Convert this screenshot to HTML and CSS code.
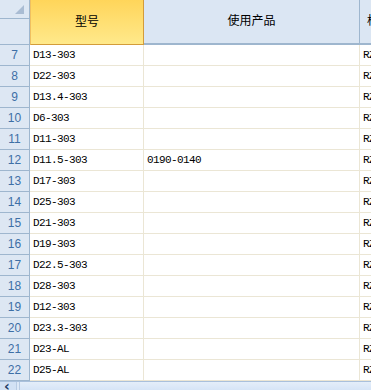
FILE: index.html
```html
<html>
<head>
  <title>Sheet</title>
  <link rel="stylesheet" href="styles.css">
</head>
<body>
  <div class="sheet">
    <div class="row head">
      <div class="corner"><span class="tri"></span><div class="corner-line"></div></div>
      <div class="hcell active">型号</div>
      <div class="hcell">使用产品</div>
      <div class="hcell last">格</div>
    </div>
    <div class="row"><div class="num">7</div><div class="cell">D13-303</div><div class="cell"></div><div class="cell last">RZ</div></div>
    <div class="row"><div class="num">8</div><div class="cell">D22-303</div><div class="cell"></div><div class="cell last">RZ</div></div>
    <div class="row"><div class="num">9</div><div class="cell">D13.4-303</div><div class="cell"></div><div class="cell last">RZ</div></div>
    <div class="row"><div class="num">10</div><div class="cell">D6-303</div><div class="cell"></div><div class="cell last">RZ</div></div>
    <div class="row"><div class="num">11</div><div class="cell">D11-303</div><div class="cell"></div><div class="cell last">RZ</div></div>
    <div class="row"><div class="num">12</div><div class="cell">D11.5-303</div><div class="cell">0190-0140</div><div class="cell last">RZ</div></div>
    <div class="row"><div class="num">13</div><div class="cell">D17-303</div><div class="cell"></div><div class="cell last">RZ</div></div>
    <div class="row"><div class="num">14</div><div class="cell">D25-303</div><div class="cell"></div><div class="cell last">RZ</div></div>
    <div class="row"><div class="num">15</div><div class="cell">D21-303</div><div class="cell"></div><div class="cell last">RZ</div></div>
    <div class="row"><div class="num">16</div><div class="cell">D19-303</div><div class="cell"></div><div class="cell last">RZ</div></div>
    <div class="row"><div class="num">17</div><div class="cell">D22.5-303</div><div class="cell"></div><div class="cell last">RZ</div></div>
    <div class="row"><div class="num">18</div><div class="cell">D28-303</div><div class="cell"></div><div class="cell last">RZ</div></div>
    <div class="row"><div class="num">19</div><div class="cell">D12-303</div><div class="cell"></div><div class="cell last">RZ</div></div>
    <div class="row"><div class="num">20</div><div class="cell">D23.3-303</div><div class="cell"></div><div class="cell last">RZ</div></div>
    <div class="row"><div class="num">21</div><div class="cell">D23-AL</div><div class="cell"></div><div class="cell last">RZ</div></div>
    <div class="row"><div class="num">22</div><div class="cell">D25-AL</div><div class="cell"></div><div class="cell last">RZ</div></div>
    <div class="scrollbar">
      <div class="arrow">&lsaquo;</div>
      <div class="track"></div>
    </div>
  </div>
</body>
</html>
```

FILE: styles.css
```css
body {
  margin: 0;
  padding: 0;
  background: #ffffff;
  overflow: hidden;
}

.sheet {
  width: 371px;
  height: 390px;
  overflow: hidden;
  font-family: "Liberation Mono", monospace;
}

.row {
  display: grid;
  grid-template-columns: 30px 114px 216px 40px;
  height: 21px;
  box-sizing: border-box;
}

.row.head {
  height: 45px;
}

.corner {
  position: relative;
  background: #dde7f3;
  border-right: 1px solid #9eb6ce;
  border-bottom: 1px solid #9eb6ce;
  box-sizing: border-box;
}

.corner-line {
  margin-top: 18px;
  height: 1px;
  background: #9eb6ce;
}

.tri {
  position: absolute;
  left: 15px;
  top: 5px;
  width: 0;
  height: 0;
  border-left: 9px solid transparent;
  border-bottom: 9px solid #a9bcd3;
}

.hcell {
  display: flex;
  align-items: center;
  justify-content: center;
  background: #dbe6f3;
  border-right: 1px solid #9eb6ce;
  border-bottom: 2px solid #9eb6ce;
  box-sizing: border-box;
  font-family: "Noto Sans CJK SC", sans-serif;
  font-size: 12px;
  color: #000;
  padding-bottom: 4px;
}

.hcell.active {
  background: linear-gradient(#ffd55a, #ffe98b);
  border-right: 1px solid #d39c3a;
  border-bottom: 1px solid #d39c3a;
  border-left: 1px solid #f0c060;
  padding-bottom: 3px;
}

.hcell.last {
  justify-content: flex-start;
  padding-left: 7px;
  border-right: none;
}

.num {
  display: flex;
  align-items: center;
  justify-content: center;
  background: #dde7f3;
  border-right: 1px solid #9eb6ce;
  border-bottom: 1px solid #9eb6ce;
  box-sizing: border-box;
  font-family: "Liberation Sans", sans-serif;
  font-size: 12px;
  color: #3d6fa6;
}

.cell {
  display: flex;
  align-items: center;
  padding-left: 3px;
  border-right: 1px solid #ebe6d5;
  border-bottom: 1px solid #ebe6d5;
  box-sizing: border-box;
  font-size: 11px;
  letter-spacing: -0.6px;
  color: #000;
}

.cell.last {
  border-right: none;
}

.scrollbar {
  display: flex;
  height: 9px;
  border-top: 1px solid #a9c0dc;
  background: #dce8f7;
}

.arrow {
  width: 17px;
  border-right: 1px solid #b8cbe3;
  background: #d2e1f4;
  font-family: "DejaVu Sans", sans-serif;
  font-size: 14px;
  font-weight: bold;
  line-height: 9px;
  color: #1f3c66;
  padding-left: 4px;
  box-sizing: border-box;
}

.track {
  flex: 1;
  margin-left: 2px;
  border-left: 1px solid #b8cbe3;
  background: linear-gradient(#e4eefa, #d4e3f6);
}
```
